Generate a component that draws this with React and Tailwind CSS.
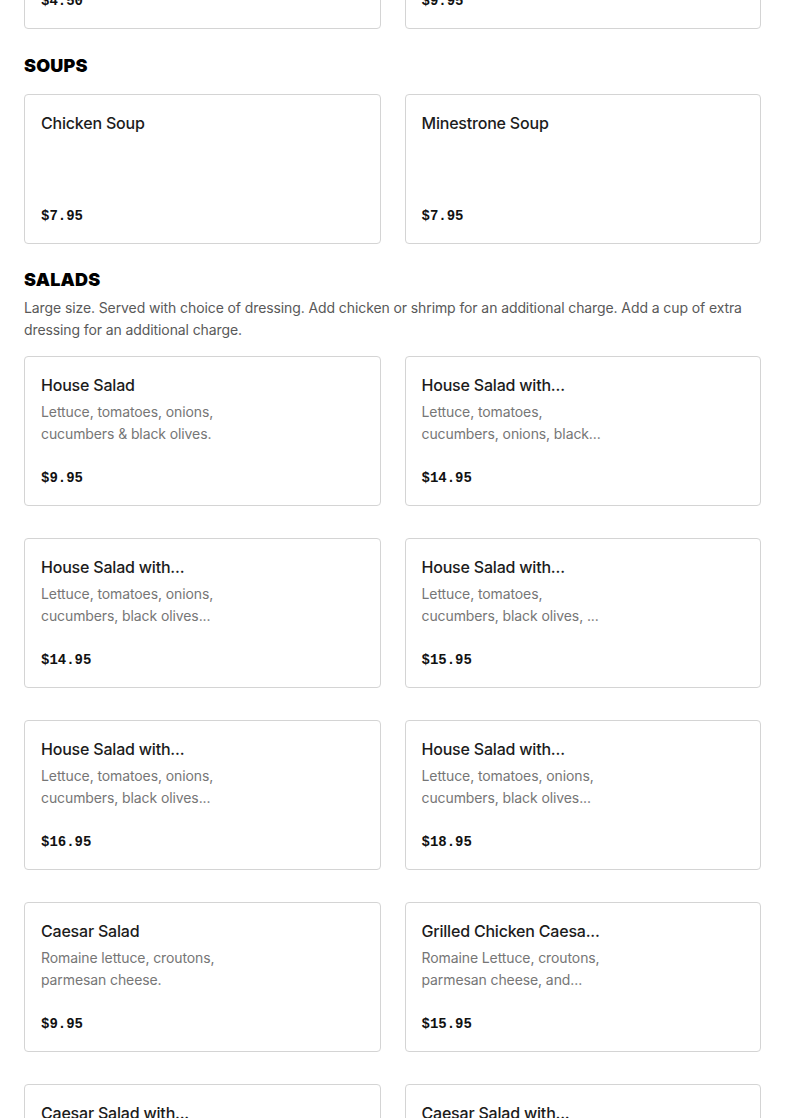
import React from "react";

const font = { fontFamily: "Inter, 'Noto Sans', sans-serif" };

function Card({ title, lines = [], price }) {
  return (
    <div className="h-[150px] rounded-[4px] border border-[#d4d4d4] bg-white px-4 pt-4 pb-[17px] flex flex-col justify-between">
      <div>
        <div className="text-[16px] leading-6 font-medium text-[#1c1c1c] whitespace-nowrap tracking-[-0.2px]">{title}</div>
        {lines.length > 0 && (
          <div className="mt-[4px] text-[14px] leading-[22px] text-[#767676] tracking-[-0.1px]">
            {lines.map((l, i) => (
              <span key={i} className="block whitespace-nowrap">{l}</span>
            ))}
          </div>
        )}
      </div>
      <div className="text-[14px] leading-5 font-bold text-[#111]" style={{ fontFamily: "'Liberation Mono', monospace" }}>
        {price}
      </div>
    </div>
  );
}

function Heading({ children }) {
  return (
    <h2 className="text-[18px] leading-7 font-black text-black tracking-[0.2px]" style={{ fontFamily: "Inter, 'Liberation Sans', sans-serif" }}>
      {children}
    </h2>
  );
}

export default function App() {
  return (
    <div className="bg-white min-h-screen overflow-hidden" style={font}>
      <div className="px-6 -mt-[121px]">
        <div className="grid grid-cols-2 gap-6">
          <Card title="" price="$4.50" />
          <Card title="" price="$9.95" />
        </div>

        <div className="mt-[23px]">
          <Heading>SOUPS</Heading>
          <div className="mt-[14px] grid grid-cols-2 gap-6">
            <Card title="Chicken Soup" price="$7.95" />
            <Card title="Minestrone Soup" price="$7.95" />
          </div>
        </div>

        <div className="mt-[22px]">
          <Heading>SALADS</Heading>
          <p className="mt-[3px] text-[14px] leading-[22px] text-[#595959] tracking-[-0.1px]">
            <span className="block whitespace-nowrap">Large size. Served with choice of dressing. Add chicken or shrimp for an additional charge. Add a cup of extra</span>
            <span className="block whitespace-nowrap">dressing for an additional charge.</span>
          </p>
          <div className="mt-[15px] grid grid-cols-2 gap-x-6 gap-y-8">
            <Card title="House Salad" lines={["Lettuce, tomatoes, onions,", "cucumbers & black olives."]} price="$9.95" />
            <Card title="House Salad with..." lines={["Lettuce, tomatoes,", "cucumbers, onions, black..."]} price="$14.95" />
            <Card title="House Salad with..." lines={["Lettuce, tomatoes, onions,", "cucumbers, black olives..."]} price="$14.95" />
            <Card title="House Salad with..." lines={["Lettuce, tomatoes,", "cucumbers, black olives, ..."]} price="$15.95" />
            <Card title="House Salad with..." lines={["Lettuce, tomatoes, onions,", "cucumbers, black olives..."]} price="$16.95" />
            <Card title="House Salad with..." lines={["Lettuce, tomatoes, onions,", "cucumbers, black olives..."]} price="$18.95" />
            <Card title="Caesar Salad" lines={["Romaine lettuce, croutons,", "parmesan cheese."]} price="$9.95" />
            <Card title="Grilled Chicken Caesa..." lines={["Romaine Lettuce, croutons,", "parmesan cheese, and..."]} price="$15.95" />
            <Card title="Caesar Salad with..." lines={["Romaine lettuce, croutons,", "parmesan cheese..."]} price="$15.95" />
            <Card title="Caesar Salad with..." lines={["Romaine lettuce, croutons,", "parmesan cheese..."]} price="$16.95" />
          </div>
        </div>
      </div>
    </div>
  );
}
